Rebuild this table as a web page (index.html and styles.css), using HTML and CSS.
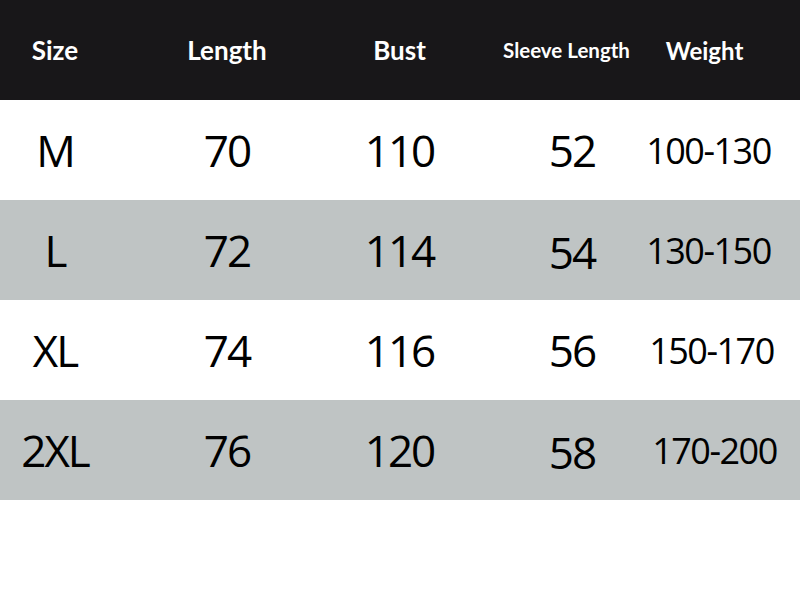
FILE: index.html
```html
<!DOCTYPE html>
<html>
<head>
<meta charset="utf-8">
<link rel="stylesheet" href="styles.css">
</head>
<body>
<div class="table">
  <div class="row head">
    <div class="cell c1">Size</div>
    <div class="cell c2">Length</div>
    <div class="cell c3">Bust</div>
    <div class="cell c4 small">Sleeve Length</div>
    <div class="cell c5 wt">Weight</div>
  </div>
  <div class="row">
    <div class="cell c1">M</div>
    <div class="cell c2">70</div>
    <div class="cell c3">110</div>
    <div class="cell c4">52</div>
    <div class="cell c5 w">100-130</div>
  </div>
  <div class="row gray">
    <div class="cell c1">L</div>
    <div class="cell c2">72</div>
    <div class="cell c3">114</div>
    <div class="cell c4 down">54</div>
    <div class="cell c5 w">130-150</div>
  </div>
  <div class="row">
    <div class="cell c1">XL</div>
    <div class="cell c2">74</div>
    <div class="cell c3">116</div>
    <div class="cell c4">56</div>
    <div class="cell c5 w s3">150-170</div>
  </div>
  <div class="row gray">
    <div class="cell c1">2XL</div>
    <div class="cell c2">76</div>
    <div class="cell c3">120</div>
    <div class="cell c4 down">58</div>
    <div class="cell c5 w s6">170-200</div>
  </div>
</div>
</body>
</html>
```
FILE: styles.css
```css
html, body {
  margin: 0;
  padding: 0;
  background: #ffffff;
}
body {
  width: 800px;
  height: 600px;
  overflow: hidden;
  font-family: "Open Sans", "Noto Sans", sans-serif;
  color: #000;
}
.table {
  display: flex;
  flex-direction: column;
}
.row {
  display: grid;
  grid-template-columns: 141px 172px 173px 154px 160px;
  height: 100px;
  background: #ffffff;
}
.row.gray {
  background: #bfc4c4;
}
.row.head {
  background: #181719;
  color: #ffffff;
  font-family: "Lato", "Open Sans", sans-serif;
  font-weight: 700;
}
.cell {
  display: flex;
  align-items: center;
  justify-content: center;
  font-size: 44px;
  letter-spacing: -2px;
  white-space: nowrap;
}
.head .cell {
  font-size: 26px;
  letter-spacing: 0;
}
.head .cell.small {
  font-size: 20.5px;
}
.head .cell.wt {
  font-size: 24px;
}
.c1 { padding-right: 31px; }
.c4 { padding-left: 18px; }
.c5 { padding-right: 23px; }
.head .c4 { padding-left: 7px; }
.head .c5 { padding-right: 31px; padding-left: 0; }
.cell.w { font-size: 36px; letter-spacing: -1.5px; }
.cell.down { padding-top: 4px; }
.cell.s3 { padding-left: 6px; }
.cell.s6 { padding-left: 12px; }
```
